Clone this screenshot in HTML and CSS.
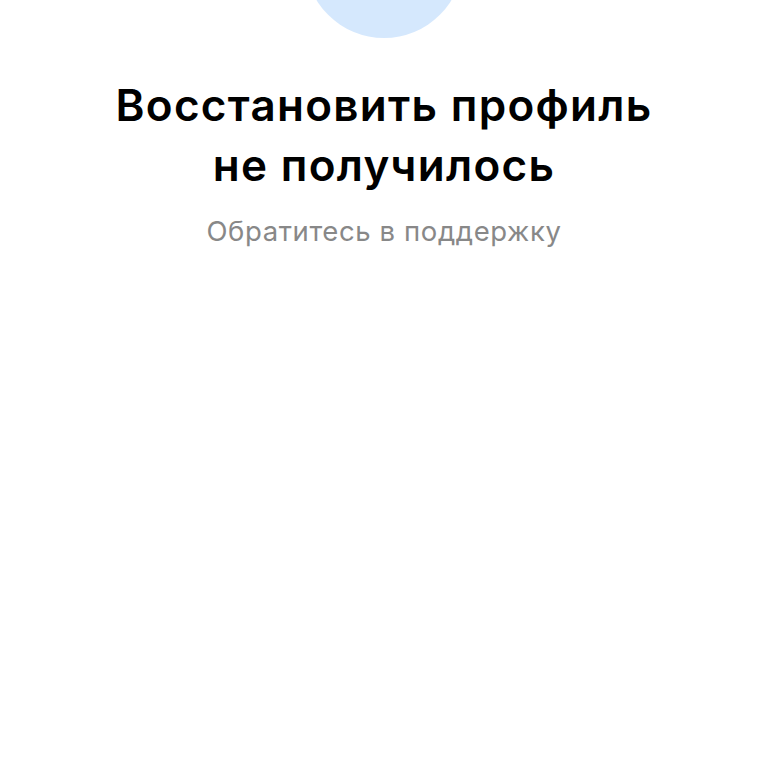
FILE: index.html
```html
<!DOCTYPE html>
<html lang="ru">
<head>
<meta charset="utf-8">
<link rel="stylesheet" href="styles.css">
</head>
<body>
<div class="page">
  <div class="avatar"></div>
  <h1 class="title">Восстановить профиль<br>не получилось</h1>
  <p class="subtitle">Обратитесь в поддержку</p>
</div>
</body>
</html>
```
FILE: styles.css
```css
html, body {
  margin: 0;
  padding: 0;
  background: #ffffff;
}
.page {
  width: 768px;
  height: 768px;
  overflow: hidden;
  display: flex;
  flex-direction: column;
  align-items: center;
  font-family: "Inter", "Noto Sans", sans-serif;
}
.avatar {
  width: 158px;
  height: 158px;
  border-radius: 50%;
  background: #d5e8fd;
  margin-top: -120px;
  flex-shrink: 0;
}
.title {
  margin: 37px 0 0;
  font-size: 44px;
  line-height: 60px;
  font-weight: 600;
  color: #000000;
  text-align: center;
  letter-spacing: 1.3px;
}
.subtitle {
  margin: 18px 0 0;
  font-size: 27.5px;
  line-height: 36px;
  font-weight: 400;
  color: #888888;
  text-align: center;
  letter-spacing: 0.6px;
}
```
